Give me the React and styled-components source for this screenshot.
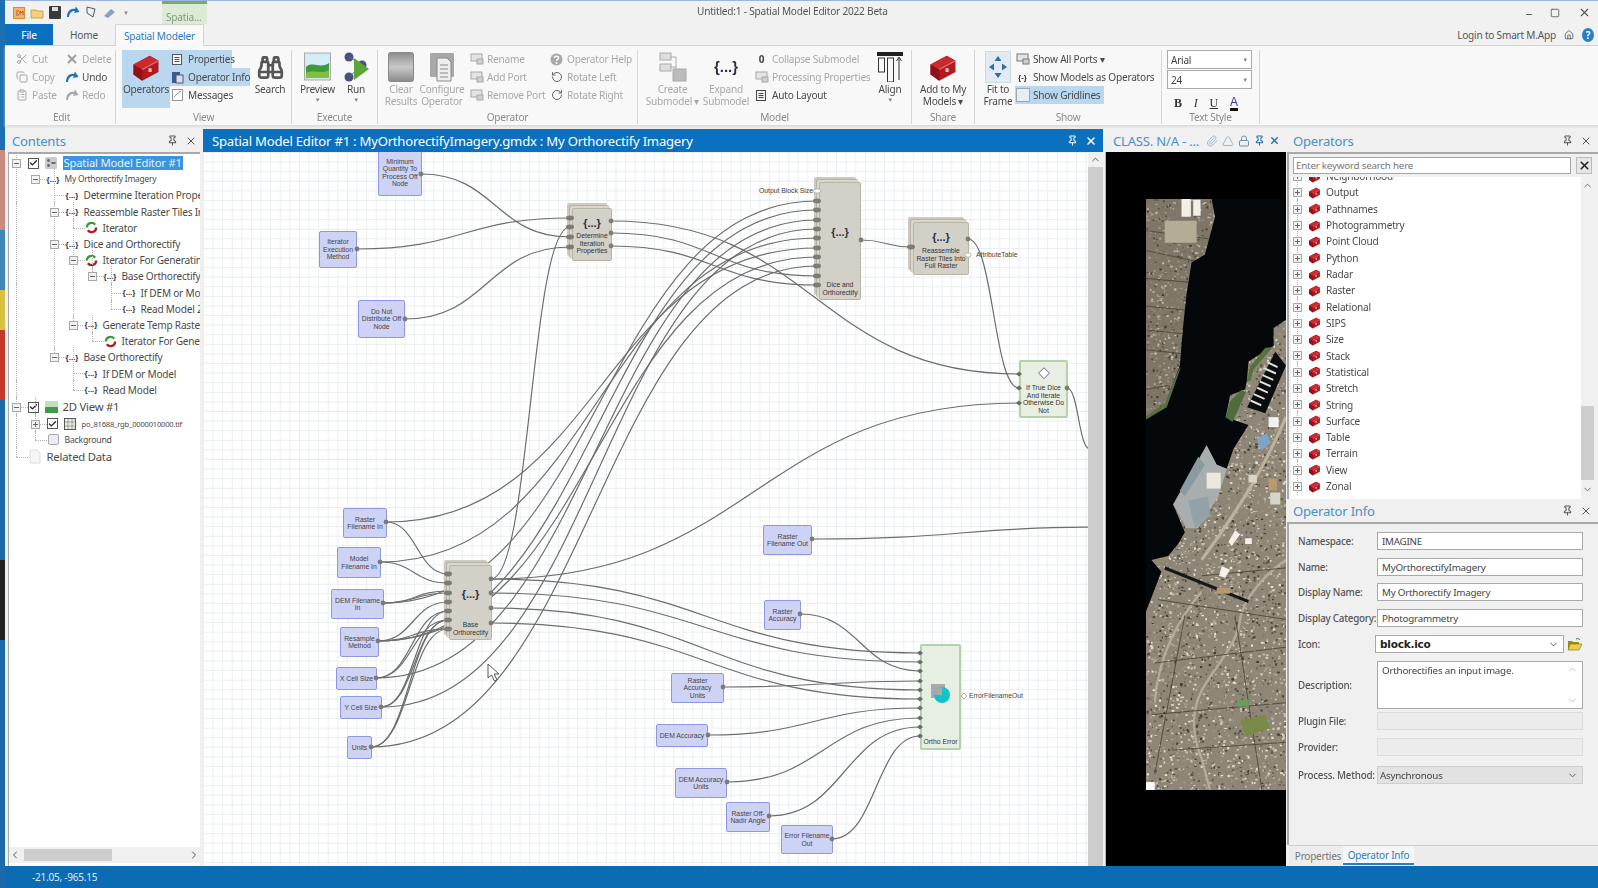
import React from "react";
import styled, { createGlobalStyle } from "styled-components";
import { Scissors, Copy, ClipboardList, X, Binoculars, RotateCcw, RotateCw, Check, ChevronDown, ChevronUp, ChevronLeft, ChevronRight, Pin, Lock, Paperclip, Triangle, Square, Home } from "lucide-react";

const Global = createGlobalStyle`
  html, body { margin: 0; padding: 0; overflow: hidden; background: #f0f0f0; }
  * { box-sizing: border-box; }
`;

const Screen = styled.div`
  width: 1598px;
  height: 888px;
  display: flex;
  overflow: hidden;
  font-family: "Noto Sans", sans-serif;
  letter-spacing: -0.22px;
  color: #444;
  filter: blur(0.35px);
`;
const DesktopStrip = styled.div`
  width: 5px;
  flex: none;
  background: linear-gradient(#1c6fb0 0 150px, #c98a80 150px 230px, #3c86b8 230px 290px, #d8c040 290px 330px, #c23a2a 330px 400px, #1d6aa8 400px 560px, #222 560px 640px, #1b69a8 640px);
`;
const Window = styled.div`
  flex: 1;
  display: flex;
  flex-direction: column;
  border-top: 1px solid #9db4de;
  min-width: 0;
`;
const TitleBar = styled.div`
  height: 23px;
  display: flex;
  align-items: center;
  background: #f1f1f1;
  position: relative;
`;
const QuickIcons = styled.div`
  display: flex;
  align-items: center;
  gap: 5px;
  padding-left: 8px;
  width: 157px;
`;
const ContextTab = styled.div`
  width: 45px;
  height: 23px;
  align-self: flex-start;
  background: #dcebd6;
  border-top: 3px solid #74ab74;
  color: #7f9c80;
  font-size: 10.1px;
  padding: 6px 0 0 4px;
  white-space: nowrap;
`;
const WindowTitle = styled.div`
  position: absolute;
  left: 692px;
  top: 3px;
  font-size: 10.1px;
  color: #555;
  white-space: nowrap;
`;
const WindowButtons = styled.div`
  margin-left: auto;
  display: flex;
  align-items: center;
  gap: 18px;
  padding-right: 7px;
  color: #555;
  font-size: 13px;
`;
const TabRow = styled.div`
  height: 22px;
  display: flex;
  align-items: stretch;
  background: #f1f1f1;
  border-bottom: 1px solid #d0d0d0;
`;
const Tab = styled.div`
  width: ${(p) => p.$w}px;
  display: flex;
  align-items: center;
  justify-content: center;
  font-size: 10.1px;
  color: ${(p) => (p.$file ? "#fff" : p.$active ? "#2a7ec0" : "#555")};
  background: ${(p) => (p.$file ? "#0c6fc0" : p.$active ? "#f9f9f9" : "transparent")};
  border: ${(p) => (p.$active ? "1px solid #d4d4d4" : "none")};
  border-bottom: none;
  ${(p) => p.$active && "height: 23px;"}
`;
const LoginArea = styled.div`
  margin-left: auto;
  display: flex;
  align-items: center;
  gap: 8px;
  padding-right: 4px;
  font-size: 10.1px;
  color: #555;
`;
const HelpDot = styled.span`
  width: 12px;
  height: 14px;
  border-radius: 50%;
  background: #2a7fc4;
  color: #fff;
  font-size: 10px;
  font-weight: 700;
  display: flex;
  align-items: center;
  justify-content: center;
`;
const Ribbon = styled.div`
  height: 80px;
  display: flex;
  padding-left: 3px;
  background: #f8f8f8;
  border-bottom: 1px solid #dcdcdc;
  box-shadow: 0 1px 2px #ddd;
`;
const Group = styled.div`
  width: ${(p) => p.$w}px;
  height: 74px;
  margin-top: 4px;
  display: flex;
  flex-direction: column;
  border-right: 1px solid #d6d6d6;
`;
const GroupBody = styled.div`
  height: 60px;
  display: flex;
  align-items: flex-start;
  padding-left: ${(p) => p.$pl || 0}px;
  gap: ${(p) => p.$gap || 0}px;
`;
const GroupLabel = styled.div`
  text-align: center;
  font-size: 10.1px;
  line-height: 14px;
  color: #8a8a8a;
`;
const Col = styled.div`
  width: ${(p) => p.$w}px;
  flex: none;
  display: flex;
  flex-direction: column;
  margin-left: ${(p) => p.$ml || 0}px;
`;
const SmallBtn = styled.div`
  height: 18px;
  display: flex;
  align-items: center;
  gap: 3px;
  font-size: 10.1px;
  white-space: nowrap;
  width: ${(p) => (p.$fit ? `${p.$fit}px` : "auto")};
  color: ${(p) => (p.$off ? "#a8a8a8" : "#4a4a4a")};
  background: ${(p) => (p.$on ? "#b9d8f0" : "transparent")};
`;
const IconSlot = styled.span`
  width: 15px;
  height: 15px;
  flex: none;
  display: flex;
  align-items: center;
  justify-content: center;
  color: ${(p) => p.$c || "#a8a8a8"};
  font-size: 10px;
  font-weight: 700;
`;
const BigBtn = styled.div`
  width: ${(p) => p.$w}px;
  height: ${(p) => (p.$on ? 58 : 60)}px;
  flex: none;
  display: flex;
  flex-direction: column;
  align-items: center;
  font-size: 10.1px;
  line-height: 11.5px;
  text-align: center;
  white-space: nowrap;
  color: ${(p) => (p.$off ? "#a8a8a8" : "#4a4a4a")};
  background: ${(p) => (p.$on ? "#b9d8f0" : "transparent")};
`;
const BigIcon = styled.div`
  height: 34px;
  flex: none;
  display: flex;
  align-items: center;
  justify-content: center;
`;
const Drop = styled.span`
  font-size: 6px;
  line-height: 8px;
  color: #888;
`;
const Braces = styled.span`
  font-family: "Liberation Sans", sans-serif;
  font-weight: 700;
  letter-spacing: 0;
  font-size: ${(p) => p.$s || 9}px;
  color: ${(p) => p.$c || "#2e2e48"};
  white-space: nowrap;
`;
const ComboSmall = styled.div`
  width: 85px;
  height: 19px;
  background: #fff;
  border: 1px solid #aaa;
  margin: 0 0 1px 5px;
  display: flex;
  align-items: center;
  justify-content: space-between;
  padding: 0 3px;
  font-size: 10px;
  color: #444;
`;
const StyleRow = styled.div`
  display: flex;
  align-items: center;
  gap: 12px;
  padding: 6px 0 0 12px;
  font-family: "Liberation Serif", serif;
  font-size: 12px;
  color: #333;
`;
const ColorA = styled.span`
  border-bottom: 3px solid #111;
  color: #2638a8;
  font-family: "Liberation Sans", sans-serif;
  line-height: 12px;
`;

const Panes = styled.div`
  flex: 1;
  min-height: 0;
  display: flex;
  margin-top: 3px;
  padding-left: 3px;
  background: #f0f0f0;
`;
const Pane = styled.div`
  width: ${(p) => p.$w}px;
  flex: none;
  margin-right: ${(p) => p.$mr || 0}px;
  display: flex;
  flex-direction: column;
  min-height: 0;
  overflow: hidden;
`;
const PaneHeader = styled.div`
  height: 23px;
  flex: none;
  display: flex;
  align-items: center;
  padding: 0 6px 0 ${(p) => p.$pl || 4}px;
  color: ${(p) => (p.$active ? "#fff" : "#4a90c8")};
  background: ${(p) => (p.$active ? "#0b70be" : "#f0f0f0")};
  font-size: 13.1px;
  white-space: nowrap;
`;
const HeaderTools = styled.div`
  margin-left: auto;
  display: flex;
  align-items: center;
  gap: ${(p) => p.$gap || 7}px;
  color: ${(p) => p.$c || "#555"};
`;
const TreeBox = styled.div`
  flex: 1;
  min-height: 0;
  background: #fff;
  border-top: 2px solid #a9a9a9;
  border-left: 1px solid #a9a9a9;
  margin-right: 3px;
  display: flex;
  flex-direction: column;
`;
const TreeList = styled.div`
  flex: 1;
  padding-top: 1px;
  overflow: hidden;
`;
const TreeRow = styled.div`
  position: relative;
  height: 16.2px;
  margin-top: ${(p) => p.$mt || 0}px;
  padding-left: ${(p) => p.$pad}px;
  display: flex;
  align-items: center;
  gap: 5px;
  white-space: nowrap;
  font-size: ${(p) => p.$fs || 10.1}px;
  color: #4a4a4a;
`;
const RowGuide = styled.span`
  position: absolute;
  left: ${(p) => p.$x}px;
  top: -2px;
  height: ${(p) => (p.$half ? "10px" : "19px")};
  border-left: 1px dotted #b5b5b5;
`;
const RowStub = styled.span`
  position: absolute;
  left: ${(p) => p.$x}px;
  top: 8px;
  width: ${(p) => p.$w}px;
  border-top: 1px dotted #b5b5b5;
`;
const Expander = styled.span`
  position: absolute;
  left: ${(p) => p.$x}px;
  top: 4px;
  width: 9px;
  height: 9px;
  background: #f2f2f2;
  border: 1px solid #a8a8a8;
  &::before {
    content: "";
    position: absolute;
    left: 1px;
    right: 1px;
    top: 3px;
    height: 1px;
    background: #666;
  }
  &::after {
    content: "";
    display: ${(p) => (p.$plus ? "block" : "none")};
    position: absolute;
    top: 1px;
    bottom: 1px;
    left: 3px;
    width: 1px;
    background: #666;
  }
`;
const CheckBox = styled.span`
  width: 11px;
  height: 11px;
  flex: none;
  border: 1px solid #555;
  background: #fff;
  display: flex;
  align-items: center;
  justify-content: center;
  margin-right: 1px;
`;
const TreeIconSlot = styled.span`
  width: 13px;
  height: 12px;
  flex: none;
  display: flex;
  align-items: center;
  justify-content: center;
`;
const TreeLabel = styled.span`
  background: ${(p) => (p.$sel ? "#3b94e0" : "transparent")};
  color: ${(p) => (p.$sel ? "#e6f2fb" : "inherit")};
  padding: 0 ${(p) => (p.$sel ? 1 : 0)}px;
  line-height: 14px;
`;
const HScroll = styled.div`
  height: 16px;
  flex: none;
  display: flex;
  align-items: center;
  background: #f0f0f0;
  margin-bottom: 3px;
  color: #555;
`;
const HThumb = styled.div`
  width: 88px;
  height: 12px;
  margin-left: 3px;
  margin-right: auto;
  background: #cdcdcd;
`;

const EditorBody = styled.div`
  flex: 1;
  min-height: 0;
  display: flex;
`;
const Canvas = styled.div`
  position: relative;
  flex: 1;
  overflow: hidden;
  background-color: #fff;
  background-image:
    linear-gradient(#e9eef0 1px, transparent 1px),
    linear-gradient(90deg, #e9eef0 1px, transparent 1px);
  background-size: 9.6px 9.6px;
`;
const Layer = styled.svg`
  position: absolute;
  left: 0;
  top: 0;
  width: 885px;
  height: 713px;
`;
const VScroll = styled.div`
  width: 15px;
  flex: none;
  display: flex;
  flex-direction: column;
  align-items: center;
  background: #f0f0f0;
  color: #555;
`;
const VThumb = styled.div`
  flex: 1;
  align-self: stretch;
  margin-top: 2px;
  background: #cdcdcd;
`;
const Node = styled.div`
  position: absolute;
  left: ${(p) => p.$x - 203}px;
  top: ${(p) => p.$y - 153}px;
  width: ${(p) => p.$w}px;
  height: ${(p) => p.$h}px;
  display: flex;
  align-items: center;
  justify-content: center;
  text-align: center;
  padding: 0 ${(p) => p.$px || 0}px;
  font-family: "Liberation Sans", sans-serif;
  letter-spacing: 0;
  font-size: 6.8px;
  line-height: 7.4px;
  color: #444;
  background: #ced2f4;
  border: 1px solid #8f98de;
  border-radius: 2px;
`;
const Block = styled.div`
  position: absolute;
  left: ${(p) => p.$x - 203}px;
  top: ${(p) => p.$y - 153}px;
  width: ${(p) => p.$w}px;
  height: ${(p) => p.$h}px;
  display: flex;
  flex-direction: column;
  align-items: center;
  justify-content: ${(p) => (p.$spread ? "space-between" : "flex-start")};
  padding: ${(p) => p.$top || 0}px 0 ${(p) => p.$bottom || 2}px;
  text-align: center;
  font-family: "Liberation Sans", sans-serif;
  letter-spacing: 0;
  font-size: 6.8px;
  line-height: 7.4px;
  color: #333;
  background: #d3d0c8;
  border: 1px solid #b8b5a6;
  border-radius: 2px;
  box-shadow: -2px -2px 0 #d9d6cc, -3px -3px 0 #b8b5a6, -5px -5px 0 #cdcabd;
`;
const GreenBlock = styled(Block)`
  background: #e6efe2;
  border: 2px solid #b4d2a8;
  box-shadow: none;
`;
const BlockGap = styled.div`
  height: ${(p) => p.$h}px;
  flex: none;
`;
const PortLabel = styled.span`
  position: absolute;
  left: ${(p) => p.$x - 203}px;
  top: ${(p) => p.$y - 153}px;
  font-family: "Liberation Sans", sans-serif;
  letter-spacing: 0;
  font-size: 6.8px;
  line-height: 8px;
  color: #444;
  white-space: nowrap;
`;
const Pointer = styled.svg`
  position: absolute;
  left: 284px;
  top: 511px;
`;

const MapPane = styled.div`
  flex: 1;
  min-height: 0;
  background: #000;
  padding: 47px 0 76px 40px;
  border-left: 1px solid #bbb;
`;
const MapSvg = styled.svg`
  display: block;
  width: 100%;
  height: 100%;
`;

const OpPanel = styled.div`
  height: ${(p) => p.$h}px;
  flex: none;
  border-top: 2px solid #a9a9a9;
  border-left: 2px solid #a9a9a9;
  display: flex;
  flex-direction: column;
  background: #f0f0f0;
`;
const SearchRow = styled.div`
  height: 23px;
  flex: none;
  display: flex;
  align-items: flex-start;
  padding: 3px 0 0 4px;
`;
const SearchInput = styled.div`
  width: 278px;
  height: 17px;
  background: #fff;
  border: 1px solid #a5a5a5;
  padding-left: 2px;
  font-size: 9.8px;
  line-height: 15px;
  color: #777;
`;
const ClearBtn = styled.div`
  width: 16px;
  height: 17px;
  margin-left: 5px;
  background: #e6e6e6;
  border: 1px solid #bbb;
  display: flex;
  align-items: center;
  justify-content: center;
  color: #222;
`;
const OpBody = styled.div`
  flex: 1;
  min-height: 0;
  display: flex;
  padding-left: 2px;
`;
const OpList = styled.div`
  width: 290px;
  overflow: hidden;
  background: #fff;
`;
const OpRows = styled.div`
  margin-top: -9px;
`;
const OpRow = styled.div`
  position: relative;
  height: 16.32px;
  padding-left: 17px;
  display: flex;
  align-items: center;
  gap: 5px;
  font-size: 10.1px;
  color: #4a4a4a;
  white-space: nowrap;
`;
const OpScroll = styled.div`
  width: 13px;
  display: flex;
  flex-direction: column;
  align-items: center;
  color: #666;
  background: #f0f0f0;
`;
const OpThumb = styled.div`
  height: 74px;
  align-self: stretch;
  margin-top: 215px;
  margin-bottom: 4px;
  background: #cdcdcd;
`;
const Form = styled.div`
  flex: 1;
  padding: 8px 15px 0 9px;
  display: flex;
  flex-direction: column;
`;
const Field = styled.div`
  display: flex;
  align-items: center;
  height: ${(p) => p.$h || 18}px;
  margin-top: ${(p) => p.$mt || 0}px;
  font-size: 9.8px;
  color: #555;
`;
const FieldLabel = styled.div`
  width: 79px;
  flex: none;
  font-weight: 500;
  white-space: nowrap;
`;
const Input = styled.div`
  flex: 1;
  height: 100%;
  display: flex;
  align-items: center;
  padding-left: 4px;
  background: ${(p) => (p.$off ? "#ececec" : "#fff")};
  border: 1px solid ${(p) => (p.$off ? "#dcdcdc" : "#a9a9a9")};
  color: #444;
  font-size: 9.8px;
`;
const IconCombo = styled.div`
  width: 189px;
  height: 100%;
  margin-left: -2px;
  background: #fff;
  border: 1px solid #a9a9a9;
  display: flex;
  align-items: center;
  justify-content: space-between;
  padding: 0 4px;
  font-family: "DejaVu Sans", sans-serif;
  font-size: 10.5px;
  font-weight: 700;
  color: #222;
`;
const FolderSlot = styled.span`
  margin-left: 3px;
  display: flex;
`;
const DescBox = styled.div`
  flex: 1;
  height: 100%;
  background: #fff;
  border: 1px solid #a9a9a9;
  padding: 2px 4px;
  display: flex;
  justify-content: space-between;
  color: #444;
`;
const DescScroll = styled.div`
  display: flex;
  flex-direction: column;
  justify-content: space-between;
  color: #bbb;
`;
const SelectBox = styled(Input)`
  background: #e2e2e2;
  justify-content: space-between;
  padding: 0 4px 0 2px;
  border: 1px solid #cfcfcf;
`;
const BottomTabs = styled.div`
  height: 20px;
  flex: none;
  display: flex;
  border-top: 1px solid #cfcfcf;
  background: #ececec;
  padding-left: 4px;
  margin-left: 2px;
  font-size: 10px;
`;
const BottomTab = styled.div`
  width: ${(p) => p.$w}px;
  display: flex;
  align-items: center;
  justify-content: center;
  color: ${(p) => (p.$on ? "#2a7ec0" : "#777")};
  background: ${(p) => (p.$on ? "#f6f6f6" : "transparent")};
  border-bottom: ${(p) => (p.$on ? "2px solid #2a7ec0" : "none")};
`;
const StatusBar = styled.div`
  height: 22px;
  flex: none;
  display: flex;
  align-items: center;
  padding-left: 27px;
  background: #0b6cb4;
  color: #dfeaf5;
  font-size: 10px;
`;

// little drawings

const Toolbox = ({ s = 13 }) => (
  <svg width={s} height={s} viewBox="0 0 24 24">
    <path d="M2 10 L15 3 L22 7 L22 16 L9 23 L2 18 Z" fill="#b3191f" />
    <path d="M2 10 L9 14 L9 23 L2 18 Z" fill="#8f1217" />
    <path d="M2 10 L15 3 L22 7 L9 14 Z" fill="#c92a2e" />
    <path d="M9 14 L22 7" stroke="#e37070" strokeWidth="1" />
    <rect x="14" y="13" width="2.5" height="3" fill="#f0c0c0" />
  </svg>
);
const IteratorIcon = () => (
  <svg width="13" height="13" viewBox="0 0 14 14" fill="none">
    <path d="M2 7 A5 5 0 0 1 11 4" stroke="#3f9a3f" strokeWidth="2.4" />
    <path d="M12 7 A5 5 0 0 1 3 10" stroke="#b3191f" strokeWidth="2.4" />
  </svg>
);
const ModelIcon = () => (
  <svg width="12" height="12" viewBox="0 0 12 12">
    <rect width="12" height="12" rx="1" fill="#ccc" />
    <circle cx="3.5" cy="3.5" r="1.4" fill="#667" />
    <circle cx="3.5" cy="8.5" r="1.4" fill="#667" />
    <rect x="6.5" y="5" width="4" height="2" fill="#667" />
  </svg>
);
const ViewIcon = () => (
  <svg width="13" height="12" viewBox="0 0 13 12">
    <rect width="13" height="12" fill="#bfe0b8" />
    <rect y="6" width="13" height="6" fill="#3f9a4a" />
  </svg>
);
const RasterIcon = () => (
  <svg width="12" height="12" viewBox="0 0 12 12">
    <rect x=".5" y=".5" width="11" height="11" fill="#e8ece4" stroke="#556" />
    <path d="M4 1v10M8 1v10M1 4h10M1 8h10" stroke="#8a9a80" strokeWidth=".8" />
  </svg>
);
const SwatchIcon = () => (
  <svg width="11" height="11" viewBox="0 0 11 11">
    <rect x=".5" y=".5" width="10" height="10" rx="1.5" fill="#eceaf5" stroke="#aaa" />
  </svg>
);
const DocIcon = () => (
  <svg width="12" height="15" viewBox="0 0 12 15">
    <path d="M1 1h7l3 3v10H1z" fill="#f6f6f6" stroke="#ddd" />
  </svg>
);
const MiniDoc = ({ c = "#a8a8a8" }) => (
  <svg width="13" height="13" viewBox="0 0 13 13" fill="none" stroke={c}>
    <rect x="1.5" y="1.5" width="9" height="10" fill="#f4f4f4" />
    <path d="M3.5 4.5h5M3.5 6.5h5M3.5 8.5h5" />
  </svg>
);
const InfoDoc = () => (
  <svg width="13" height="13" viewBox="0 0 13 13">
    <rect x="1" y="1" width="8" height="11" fill="#3c5a96" />
    <rect x="5" y="4" width="7" height="8" fill="#d8deee" stroke="#556" />
  </svg>
);
const CheckDoc = () => (
  <svg width="13" height="14" viewBox="0 0 13 14" fill="none">
    <rect x="1.5" y="1.5" width="10" height="11" fill="#fff" stroke="#999" />
    <path d="M3 9 L6 6 L10 3" stroke="#7a9ac0" />
  </svg>
);
const DeleteX = () => <X size={14} strokeWidth={3.5} color="#a0a0a0" />;
const UndoArrow = ({ c = "#1f72b8" }) => (
  <svg width="14" height="13" viewBox="0 0 14 13">
    <path d="M1 11 C1 5 5 2 9 3 L10 0.5 L13.5 6 L8 7 L8.8 5.2 C6 4.6 3.5 7 3 11 Z" fill={c} />
  </svg>
);
const Mini = ({ c = "#a8a8a8" }) => (
  <svg width="14" height="12" viewBox="0 0 14 12">
    <rect x="1" y="1" width="11" height="7" fill="#e4e4e4" stroke={c} />
    <rect x="7" y="6" width="6" height="5" fill="#cfcfcf" stroke={c} />
  </svg>
);
const HelpIcon = () => (
  <svg width="13" height="13" viewBox="0 0 13 13">
    <circle cx="6.5" cy="6.5" r="6" fill="#a8a8a8" />
    <path d="M4.4 5 C4.4 2.6 8.6 2.6 8.6 5 C8.6 6.4 6.5 6.4 6.5 8" stroke="#fff" strokeWidth="1.4" fill="none" />
    <circle cx="6.5" cy="10" r=".9" fill="#fff" />
  </svg>
);
const PreviewIcon = () => (
  <svg width="27" height="31" viewBox="0 0 27 31">
    <rect x=".5" y="1" width="26" height="27" fill="#cfe8f4" stroke="#aaa" />
    <rect x="2" y="3" width="23" height="10" fill="#d4edf7" />
    <path d="M2 15 C8 9 16 17 25 11 V26 H2 Z" fill="#3d9a3d" />
    <path d="M2 21 C9 17 17 23 25 18 V26 H2 Z" fill="#7fbe3f" />
  </svg>
);
const RunIcon = () => (
  <svg width="28" height="32" viewBox="0 0 28 32">
    <circle cx="7" cy="6" r="4.5" fill="#4a4f80" />
    <circle cx="20" cy="14" r="4.5" fill="#4a4f80" />
    <circle cx="7" cy="26" r="4.5" fill="#4a4f80" />
    <path d="M7 6 L20 14 L7 26" stroke="#666" fill="none" />
    <path d="M12 7 L27 18 L12 29 Z" fill="#5aa638" />
  </svg>
);
const ClearIcon = () => (
  <svg width="26" height="30" viewBox="0 0 26 30">
    <defs>
      <linearGradient id="clr" x1="0" y1="0" x2="0" y2="1">
        <stop offset="0" stopColor="#8c8c8c" />
        <stop offset=".5" stopColor="#c8c8c8" />
        <stop offset="1" stopColor="#8a8a8a" />
      </linearGradient>
    </defs>
    <rect x=".5" y=".5" width="25" height="29" rx="2" fill="url(#clr)" stroke="#888" />
  </svg>
);
const ConfigureIcon = () => (
  <svg width="26" height="30" viewBox="0 0 26 30">
    <rect x="1" y="1" width="24" height="24" rx="1" fill="#a8a8a8" />
    <path d="M8 6h10l4 4v19H8z" fill="#eee" stroke="#888" />
    <path d="M11 13h8M11 17h8M11 21h8M11 25h8" stroke="#888" />
  </svg>
);
const CreateIcon = () => (
  <svg width="28" height="30" viewBox="0 0 28 30" fill="#ddd" stroke="#aaa">
    <rect x="1" y="1" width="11" height="7" />
    <rect x="1" y="12" width="11" height="7" />
    <rect x="14" y="17" width="13" height="12" fill="#bbb" />
    <path d="M12 5h5v12M12 15h5" fill="none" />
  </svg>
);
const AlignIcon = () => (
  <svg width="26" height="30" viewBox="0 0 26 30" fill="none" stroke="#333">
    <rect x="0" y="0" width="26" height="4" fill="#222" stroke="none" />
    <rect x="1.5" y="6" width="6" height="14" />
    <rect x="10.5" y="6" width="6" height="24" />
    <path d="M22 28V6M19.5 9 22 5l2.5 4" />
  </svg>
);
const FitIcon = () => (
  <svg width="26" height="32" viewBox="0 0 26 32">
    <rect x=".5" y=".5" width="25" height="31" fill="#e4eaf2" stroke="#cdd" />
    <path d="M13 5l3.5 5h-7zM13 27l3.5-5h-7zM4 16l5-3.5v7zM22 16l-5-3.5v7z" fill="#2a6fb0" />
  </svg>
);
const GridBox = () => (
  <svg width="14" height="14" viewBox="0 0 14 14">
    <rect x=".5" y=".5" width="13" height="13" fill="#e6eef4" stroke="#9aa" />
  </svg>
);
const FolderIcon = () => (
  <svg width="15" height="13" viewBox="0 0 15 13">
    <path d="M1 3h4l1 1h6v8H1z" fill="#9a8a10" />
    <path d="M3 6h12l-3 6H1z" fill="#e8d04a" stroke="#7a6c10" strokeWidth=".6" />
    <path d="M9 1c2-1 3 0 4 1" stroke="#2a7a3a" fill="none" />
  </svg>
);

const Small = ({ icon, c, label, off, on, fit }) => (
  <SmallBtn $off={off} $on={on} $fit={fit}>
    <IconSlot $c={c}>{icon}</IconSlot>
    {label}
  </SmallBtn>
);
const Big = ({ icon, w, lines, off, on, drop }) => (
  <BigBtn $w={w} $off={off} $on={on}>
    <BigIcon>{icon}</BigIcon>
    {lines.map((t) => (
      <span key={t}>{t}</span>
    ))}
    {drop && <Drop>▼</Drop>}
  </BigBtn>
);

const RibbonBar = () => (
  <Ribbon>
    <Group $w={108}>
      <GroupBody $pl={6}>
        <Col $w={50}>
          <Small off icon={<Scissors size={12} />} label="Cut" />
          <Small off icon={<Copy size={12} />} label="Copy" />
          <Small off icon={<ClipboardList size={12} />} label="Paste" />
        </Col>
        <Col $w={50}>
          <Small off icon={<DeleteX />} label="Delete" />
          <Small icon={<UndoArrow />} label="Undo" />
          <Small off icon={<UndoArrow c="#a8a8a8" />} label="Redo" />
        </Col>
      </GroupBody>
      <GroupLabel>Edit</GroupLabel>
    </Group>
    <Group $w={176}>
      <GroupBody $pl={6}>
        <BigBtn $w={48} $on>
          <BigIcon>
            <Toolbox s={30} />
          </BigIcon>
          <span>Operators</span>
        </BigBtn>
        <Col $w={85}>
          <Small on fit={62} c="#555" icon={<MiniDoc c="#556" />} label="Properties" />
          <Small on fit={80} icon={<InfoDoc />} label="Operator Info" />
          <Small icon={<CheckDoc />} label="Messages" />
        </Col>
        <Big w={30} icon={<Binoculars size={27} color="#555" strokeWidth={2.4} />} lines={["Search"]} />
      </GroupBody>
      <GroupLabel>View</GroupLabel>
    </Group>
    <Group $w={86}>
      <GroupBody $pl={8} $gap={5}>
        <Big w={35} icon={<PreviewIcon />} lines={["Preview"]} drop />
        <Big w={32} icon={<RunIcon />} lines={["Run"]} drop />
      </GroupBody>
      <GroupLabel>Execute</GroupLabel>
    </Group>
    <Group $w={260}>
      <GroupBody $pl={7}>
        <Big off w={32} icon={<ClearIcon />} lines={["Clear", "Results"]} />
        <Big off w={50} icon={<ConfigureIcon />} lines={["Configure", "Operator"]} />
        <Col $w={80} $ml={2}>
          <Small off icon={<Mini />} label="Rename" />
          <Small off icon={<Mini />} label="Add Port" />
          <Small off icon={<Mini />} label="Remove Port" />
        </Col>
        <Col $w={85}>
          <Small off icon={<HelpIcon />} label="Operator Help" />
          <Small c="#666" off icon={<RotateCcw size={12} />} label="Rotate Left" />
          <Small c="#666" off icon={<RotateCw size={12} />} label="Rotate Right" />
        </Col>
      </GroupBody>
      <GroupLabel>Operator</GroupLabel>
    </Group>
    <Group $w={274}>
      <GroupBody $pl={7}>
        <Big off w={55} icon={<CreateIcon />} lines={["Create", "Submodel ▾"]} />
        <Big off w={52} icon={<Braces $s={15}>{"{...}"}</Braces>} lines={["Expand", "Submodel"]} />
        <Col $w={119} $ml={2}>
          <Small c="#444" off icon="0" label="Collapse Submodel" />
          <Small off icon={<Mini />} label="Processing Properties" />
          <Small icon={<MiniDoc c="#445" />} label="Auto Layout" />
        </Col>
        <Big w={34} icon={<AlignIcon />} lines={["Align"]} drop />
      </GroupBody>
      <GroupLabel>Model</GroupLabel>
    </Group>
    <Group $w={63}>
      <GroupBody>
        <Big w={62} icon={<Toolbox s={30} />} lines={["Add to My", "Models ▾"]} />
      </GroupBody>
      <GroupLabel>Share</GroupLabel>
    </Group>
    <Group $w={187}>
      <GroupBody $pl={8}>
        <Big w={30} icon={<FitIcon />} lines={["Fit to", "Frame"]} />
        <Col $w={146} $ml={2}>
          <Small c="#777" icon={<Mini c="#777" />} label="Show All Ports   ▾" />
          <Small c="#445" icon={<Braces $s={8}>{"{-}"}</Braces>} label="Show Models as Operators" />
          <Small on fit={89} icon={<GridBox />} label="Show Gridlines" />
        </Col>
      </GroupBody>
      <GroupLabel>Show</GroupLabel>
    </Group>
    <Group $w={98}>
      <GroupBody>
        <Col $w={98}>
          <ComboSmall>
            Arial
            <Drop>▼</Drop>
          </ComboSmall>
          <ComboSmall>
            24
            <Drop>▼</Drop>
          </ComboSmall>
          <StyleRow>
            <b>B</b>
            <i>I</i>
            <u>U</u>
            <ColorA>A</ColorA>
          </StyleRow>
        </Col>
      </GroupBody>
      <GroupLabel>Text Style</GroupLabel>
    </Group>
  </Ribbon>
);

// contents tree
const L = (n) => 16 + 19 * n;
const treeRows = [
  { label: "Spatial Model Editor #1", x: 0, exp: "-", check: 1, icon: <ModelIcon />, pad: 18.5, sel: 1, fs: 11.3 },
  { label: "My Orthorectify Imagery", x: 1, exp: "-", icon: "b", pad: 37.5, fs: 8.4 },
  { label: "Determine Iteration Properties", x: 2, icon: "b", pad: 56.5 },
  { label: "Reassemble Raster Tiles Into", x: 2, exp: "-", icon: "b", pad: 56.5 },
  { label: "Iterator", x: 3, icon: <IteratorIcon />, pad: 75.5 },
  { label: "Dice and Orthorectify", x: 2, exp: "-", icon: "b", pad: 56.5 },
  { label: "Iterator For Generating", x: 3, exp: "-", icon: <IteratorIcon />, pad: 75.5 },
  { label: "Base Orthorectify", x: 4, exp: "-", icon: "b", pad: 94.5 },
  { label: "If DEM or Model", x: 5, icon: "b", pad: 113.5 },
  { label: "Read Model 2", x: 5, icon: "b", pad: 113.5 },
  { label: "Generate Temp Raster", x: 3, exp: "-", icon: "b", pad: 75.5 },
  { label: "Iterator For Generating", x: 4, icon: <IteratorIcon />, pad: 94.5 },
  { label: "Base Orthorectify", x: 2, exp: "-", icon: "b", pad: 56.5 },
  { label: "If DEM or Model", x: 3, icon: "b", pad: 75.5 },
  { label: "Read Model", x: 3, icon: "b", pad: 75.5 },
  { label: "2D View #1", x: 0, exp: "-", check: 1, icon: <ViewIcon />, pad: 18.5, mt: 1.5, fs: 11.3 },
  { label: "po_81688_rgb_0000010000.tif", x: 1, exp: "+", check: 1, icon: <RasterIcon />, pad: 37.5, fs: 7.6 },
  { label: "Background", x: 1, icon: <SwatchIcon />, pad: 37.5, fs: 8.7 },
  { label: "Related Data", x: 0, icon: <DocIcon />, pad: 19.5, mt: 1, fs: 11.3 },
];
const guideSpans = [
  { level: 0, from: 0, to: 18 },
  { level: 2, from: 1, to: 12 },
  { level: 3, from: 3, to: 4 },
  { level: 3, from: 5, to: 10 },
  { level: 3, from: 12, to: 14 },
  { level: 4, from: 6, to: 7 },
  { level: 4, from: 10, to: 11 },
  { level: 5, from: 7, to: 9 },
  { level: 1, from: 15, to: 17 },
];

const ContentsTree = () => (
  <TreeList>
    {treeRows.map((r, i) => (
      <TreeRow key={i} $pad={r.pad} $mt={r.mt} $fs={r.fs}>
        {guideSpans
          .filter((g) => i >= g.from && i <= g.to)
          .map((g) => (
            <RowGuide key={g.level + "-" + g.from} $x={L(g.level) - 9} $half={i === g.to} />
          ))}
        {i > 0 && <RowStub $x={L(r.x) - 9} $w={12} />}
        {r.exp && <Expander $x={L(r.x) - 13} $plus={r.exp === "+"} />}
        {r.check && (
          <CheckBox>
            <Check size={10} strokeWidth={3.5} color="#222" />
          </CheckBox>
        )}
        <TreeIconSlot>{r.icon === "b" ? <Braces $s={8}>{"{...}"}</Braces> : r.icon}</TreeIconSlot>
        <TreeLabel $sel={r.sel}>{r.label}</TreeLabel>
      </TreeRow>
    ))}
  </TreeList>
);

// model canvas, all in screen coords (viewBox starts at 203,153)
const wire = ([x1, y1], [x2, y2]) => {
  const mx = (x1 + x2) / 2;
  return `M${x1} ${y1} C${mx} ${y1} ${mx} ${y2} ${x2} ${y2}`;
};
const P = {
  min: [421, 175],
  iter: [357, 250],
  dist: [405, 320],
  rasIn: [386, 523],
  modIn: [380, 563],
  demIn: [383, 604],
  res: [378, 642],
  xc: [376, 679],
  yc: [381, 708],
  units: [371, 748],
  rasOut: [812, 540],
  rasAcc: [800, 615],
  rasAccU: [723, 688],
  demAcc: [708, 736],
  demAccU: [727, 783],
  nadir: [769, 817],
  errOut: [832, 840],
};
const detIn = [219, 228, 238, 248].map((y) => [570, y]);
const detOut = [222, 234, 247].map((y) => [611, y]);
const diceIn = [202, 211, 221, 230, 239, 249, 258, 267, 277, 286].map((y) => [817, y]);
const baseIn = [575, 584, 594, 603, 612, 621, 630].map((y) => [448, y]);
const baseOut = [580, 594, 609, 624].map((y) => [491, y]);
const errIn = [654, 663, 672, 682, 691, 700, 709, 719, 728, 737].map((y) => [920, y]);
const ifIn = [375, 389, 404].map((y) => [1019, y]);

const wires = [
  [P.min, detIn[2]],
  [P.iter, detIn[0]],
  [P.dist, detIn[3]],
  [baseOut[0], detIn[1]],
  [detOut[0], ifIn[0]],
  [detOut[1], diceIn[8]],
  [detOut[2], diceIn[9]],
  [P.demIn, diceIn[0]],
  [P.res, diceIn[1]],
  [P.xc, diceIn[2]],
  [P.yc, diceIn[3]],
  [P.modIn, diceIn[4]],
  [P.rasIn, diceIn[5]],
  [P.res, diceIn[6]],
  [P.units, diceIn[7]],
  [P.rasIn, baseIn[0]],
  [P.modIn, baseIn[1]],
  [P.demIn, baseIn[2]],
  [P.demIn, [448, 592]],
  [P.res, baseIn[3]],
  [P.xc, baseIn[4]],
  [P.yc, baseIn[5]],
  [P.units, baseIn[6]],
  [P.res, baseIn[6]],
  [P.xc, baseIn[5]],
  [P.yc, baseIn[4]],
  [P.units, baseIn[5]],
  [baseOut[0], ifIn[2]],
  [baseOut[0], errIn[0]],
  [baseOut[1], errIn[1]],
  [baseOut[2], errIn[4]],
  [baseOut[3], errIn[5]],
  [P.rasAcc, errIn[2]],
  [P.rasAccU, errIn[3]],
  [P.demAcc, errIn[6]],
  [P.demAccU, errIn[7]],
  [P.nadir, errIn[8]],
  [P.errOut, errIn[9]],
  [P.rasOut, [1110, 528]],
  [[861, 241], [911, 248]],
  [[968, 240], ifIn[1]],
  [[1067, 389], [1090, 450]],
];
const ports = [
  ...Object.values(P),
  [861, 241],
  [968, 240],
  [1067, 389],
  ...detOut,
  ...baseOut,
];
const ovalPorts = [...detIn, ...diceIn, ...baseIn, [911, 248]];
const dotPorts = [...errIn, ...ifIn];

const inputNodes = [
  { x: 378, y: 150, w: 44, h: 47, t: "Minimum Quantity To Process Off Node" },
  { x: 319, y: 232, w: 38, h: 37, t: "Iterator Execution Method" },
  { x: 358, y: 301, w: 47, h: 38, t: "Do Not Distribute Off Node" },
  { x: 343, y: 509, w: 44, h: 30, t: "Raster Filename In" },
  { x: 337, y: 548, w: 44, h: 31, t: "Model Filename In" },
  { x: 331, y: 590, w: 53, h: 30, t: "DEM Filename In" },
  { x: 340, y: 628, w: 39, h: 30, t: "Resample Method" },
  { x: 336, y: 668, w: 41, h: 23, t: "X Cell Size" },
  { x: 340, y: 697, w: 42, h: 23, t: "Y Cell Size" },
  { x: 347, y: 737, w: 25, h: 23, t: "Units" },
  { x: 763, y: 526, w: 49, h: 30, t: "Raster Filename Out" },
  { x: 764, y: 601, w: 37, h: 30, t: "Raster Accuracy" },
  { x: 671, y: 674, w: 53, h: 30, t: "Raster Accuracy Units", px: 5 },
  { x: 656, y: 725, w: 52, h: 23, t: "DEM Accuracy" },
  { x: 675, y: 769, w: 52, h: 30, t: "DEM Accuracy Units" },
  { x: 726, y: 803, w: 44, h: 30, t: "Raster Off-Nadir Angle" },
  { x: 781, y: 826, w: 52, h: 29, t: "Error Filename Out" },
];

const ModelCanvas = () => (
  <Canvas>
    <Layer viewBox="203 153 885 713" fill="none">
      {wires.map(([a, b], i) => (
        <path key={i} d={wire(a, b)} stroke="#6d6d6d" strokeWidth="1.2" />
      ))}
    </Layer>
    {inputNodes.map((n) => (
      <Node key={n.t} $x={n.x} $y={n.y} $w={n.w} $h={n.h} $px={n.px}>
        {n.t}
      </Node>
    ))}
    <Block $x={572} $y={209} $w={40} $h={53} $top={11}>
      <Braces $s={11}>{"{...}"}</Braces>
      <BlockGap $h={5} />
      Determine Iteration Properties
    </Block>
    <Block $x={819} $y={183} $w={42} $h={118} $spread $top={46} $bottom={3}>
      <Braces $s={11}>{"{...}"}</Braces>
      <span>Dice and Orthorectify</span>
    </Block>
    <Block $x={913} $y={223} $w={56} $h={53} $top={11}>
      <Braces $s={11}>{"{...}"}</Braces>
      <BlockGap $h={6} />
      Reassemble Raster Tiles Into Full Raster
    </Block>
    <Block $x={449} $y={566} $w={43} $h={75} $spread $top={25} $bottom={3}>
      <Braces $s={11}>{"{...}"}</Braces>
      <span>Base Orthorectify</span>
    </Block>
    <GreenBlock $x={1019} $y={361} $w={49} $h={58} $top={5}>
      <svg width="16" height="16" viewBox="0 0 16 16">
        <path d="M8 1 L15 8 L8 15 L1 8 Z" fill="#fff" stroke="#5a5f78" strokeWidth="1.2" />
      </svg>
      <BlockGap $h={5} />
      If True Dice And Iterate Otherwise Do Not
    </GreenBlock>
    <GreenBlock $x={920} $y={645} $w={41} $h={106} $spread $top={38} $bottom={3}>
      <svg width="20" height="20" viewBox="0 0 20 20">
        <rect x="0" y="0" width="14" height="14" fill="#a9a9a9" />
        <circle cx="11" cy="11" r="8" fill="#10c4cc" />
        <path d="M11 11V3A8 8 0 0 0 3 11Z" fill="#a9a9a9" />
      </svg>
      <span>Ortho Error</span>
    </GreenBlock>
    <PortLabel $x={759} $y={188}>Output Block Size</PortLabel>
    <PortLabel $x={976} $y={252}>AttributeTable</PortLabel>
    <PortLabel $x={969} $y={693}>ErrorFilenameOut</PortLabel>
    <Layer viewBox="203 153 885 713">
      {ports.map(([x, y], i) => (
        <circle key={i} cx={x} cy={y} r="2.4" fill="#7c7c74" />
      ))}
      {ovalPorts.map(([x, y], i) => (
        <ellipse key={i} cx={x} cy={y} rx="4" ry="2.4" fill="#7c7c74" />
      ))}
      {dotPorts.map(([x, y], i) => (
        <path key={i} d={`M${x - 3} ${y}L${x} ${y - 2.5}L${x + 3} ${y}L${x} ${y + 2.5}Z`} fill="#6a6a6a" />
      ))}
      <ellipse cx="817" cy="192" rx="4" ry="2.2" fill="#fff" stroke="#999" strokeWidth=".7" />
      <ellipse cx="968" cy="256" rx="3" ry="2.2" fill="#fff" stroke="#999" strokeWidth=".7" />
      <path d="M958 697l3-3 3 3-3 3z" fill="#fff" stroke="#888" strokeWidth=".7" transform="translate(3 0)" />
    </Layer>
    <Pointer width="14" height="20" viewBox="0 0 14 20">
      <path d="M1 1 L1 15 L4.5 12 L7.5 18 L10 17 L7.2 11 L12 11 Z" fill="#fff" stroke="#555" />
    </Pointer>
  </Canvas>
);

// satellite strip, coordinates are arbitrary map units
const seeded = (seed) => {
  let s = seed;
  return () => {
    s = (s * 16807) % 2147483647;
    return s / 2147483647;
  };
};
const buildBlocks = () => {
  const r = seeded(4211);
  const out = [];
  const tones = ["#e0d9ca", "#5c554a", "#a89c88", "#cdc1ab", "#3e3a33", "#b8a88e", "#e9e3d6", "#7d7565", "#9d927f", "#c8c2b4", "#4d473e", "#8d8472"];
  for (let i = 0; i < 5200; i++) {
    const x = 134 + r() * 418;
    const y = 50 + r() * 1490;
    out.push({ x, y, w: 3 + r() * 5, h: 2 + r() * 4, fill: tones[Math.floor(r() * tones.length)] });
  }
  return out;
};
const blocks = buildBlocks();
const waterShape =
  "M330 50 L340 95 L310 190 L270 210 L255 290 L245 370 L235 470 L190 570 L134 605 L134 1090 L180 990 L150 960 L200 950 L230 920 L250 890 L215 820 L315 670 L345 720 L375 730 L395 680 L440 620 L372 600 L385 545 L430 530 L435 510 L440 460 L515 420 L515 375 L552 355 L552 50 Z";

const SatelliteMap = () => (
  <MapSvg viewBox="134 50 418 1490" preserveAspectRatio="none">
    <rect x="134" y="50" width="418" height="1490" fill="#8e8676" />
    {blocks.map((b, i) => (
      <rect key={i} x={b.x} y={b.y} width={b.w} height={b.h} fill={b.fill} />
    ))}
    <rect x="134" y="50" width="200" height="560" fill="#4a3f30" opacity=".22" />
    <g fill="none" stroke="#b5ab98" strokeWidth="7">
      <path d="M552 960 C480 1000 420 1070 415 1110 C410 1170 330 1240 300 1290 C270 1340 270 1400 300 1460 L325 1540" />
      <path d="M300 1040 C230 1110 170 1200 160 1320" />
      <path d="M552 600 C500 700 440 800 300 960" stroke="#bdb29e" strokeWidth="9" />
    </g>
    <path d="M190 980 L440 1065" stroke="#15181a" strokeWidth="8" />
    <g fill="none" stroke="#4c463c" strokeWidth="2.4">
      <path d="M134 180 L300 210M134 320 L250 330M134 430 L240 440M134 530 L200 520M134 130 L320 150M134 250 L260 260M134 380 L245 390" />
      <path d="M170 1060 L552 1110M160 1220 L552 1180M150 1350 L552 1320M300 1000 L552 980M250 1100 L160 1500M400 1100 L480 1540M200 1440 L552 1420" />
    </g>
    <path d={waterShape} fill="#05080a" />
    <path d="M436 575 L520 435 L552 470 L490 590 Z" fill="#0a0c0e" />
    <path d="M240 50h28v45h-28zM275 52h22v40h-22z" fill="#f0efe8" />
    <path d="M190 105h95v55h-95z" fill="#b4ad95" />
    <path d="M134 598 L190 565 L232 480 L238 474 L196 575 L134 606 Z" fill="#566f44" />
    <path d="M435 510 L445 472 L490 425 L512 424 L490 446 L455 480 L446 510 Z" fill="#55733f" />
    <path d="M372 600 L385 560 L420 530 L432 538 L410 580 L392 612 Z" fill="#4f6d3c" />
    <g stroke="#e2e2e2" strokeWidth="5" fill="none">
      <path d="M497 462l30 12M490 478l32 12M482 494l32 12M474 510l32 12M466 526l32 12M456 542l32 12M446 558l32 12" />
    </g>
    <path d="M500 600h30v25h-30z" fill="#f2f2f0" />
    <path d="M465 655 L495 640 L505 665 L478 685 Z" fill="#7da4c8" />
    <path d="M315 672 L345 720 L375 730 L350 800 L290 880 L255 880 L215 820 Z" fill="#a8aeae" />
    <path d="M315 740h42v40h-42z" fill="#ece8dc" />
    <path d="M260 810 L320 800 L325 850 L280 880 Z" fill="#93a2a8" />
    <path d="M290 700 L310 720 L250 800 L235 785 Z" fill="#8b9aa0" />
    <path d="M400 885 L415 895 L390 925 L380 915ZM430 905h20v15h-20zM360 975 L385 985 L370 1005 L352 1000Z" fill="#f3f1ea" />
    <path d="M405 1312h36v18h-36z" fill="#6d9a5a" />
    <path d="M415 1365 L490 1350 L505 1385 L430 1405 Z" fill="#7b8a48" />
    <path d="M134 1520h26v20h-26z" fill="#fbfbfb" />
    <path d="M440 745h25v20h-25zM505 790h30v30h-30z" fill="#d8d4c8" />
    <path d="M500 755h25v30h-25z" fill="#b89a70" />
    <path d="M345 1030h40v15h-40z" fill="#b8986e" />
  </MapSvg>
);

const operatorNames = ["Neighborhood", "Output", "Pathnames", "Photogrammetry", "Point Cloud", "Python", "Radar", "Raster", "Relational", "SIPS", "Size", "Stack", "Statistical", "Stretch", "String", "Surface", "Table", "Terrain", "View", "Zonal"];

const PinIcon = ({ c = "#555" }) => <Pin size={11} color={c} strokeWidth={2.2} />;
const TopGap = styled.span`
  display: flex;
  margin-top: ${(p) => p.$t}px;
`;

export default function App() {
  return (
    <Screen>
      <Global />
      <DesktopStrip />
      <Window>
        <TitleBar>
          <QuickIcons>
            <svg width="12" height="12" viewBox="0 0 12 12">
              <rect x=".5" y=".5" width="11" height="11" fill="#f2b36a" stroke="#e08a30" />
              <path d="M3 4h3M3 6h2M3 8h3M7 8V4l1.5 2L10 4v4" stroke="#a33" strokeWidth=".7" fill="none" />
            </svg>
            <svg width="14" height="12" viewBox="0 0 14 12">
              <path d="M1 3h5l1 1h6v7H1z" fill="#f0cf80" stroke="#c9a34a" />
            </svg>
            <svg width="12" height="13" viewBox="0 0 12 13">
              <rect width="12" height="13" rx="1" fill="#3a3a3a" />
              <rect x="3" y="1" width="6" height="4" fill="#ddd" />
            </svg>
            <UndoArrow />
            <svg width="12" height="13" viewBox="0 0 12 13" fill="none" stroke="#555">
              <path d="M2 1 L10 3 L8 11 L2 7 Z" />
            </svg>
            <svg width="16" height="12" viewBox="0 0 16 12">
              <path d="M2 9 L9 2 L13 5 L6 11 Z" fill="#8aa0c0" />
            </svg>
            <Drop>▼</Drop>
          </QuickIcons>
          <ContextTab>Spatia...</ContextTab>
          <WindowTitle>Untitled:1 - Spatial Model Editor 2022 Beta</WindowTitle>
          <WindowButtons>
            <span>–</span>
            <Square size={10} strokeWidth={2} />
            <X size={13} strokeWidth={2} />
          </WindowButtons>
        </TitleBar>
        <TabRow>
          <Tab $file $w={48}>File</Tab>
          <Tab $w={62}>Home</Tab>
          <Tab $active $w={89}>Spatial Modeler</Tab>
          <LoginArea>
            Login to Smart M.App
            <Home size={10} />
            <HelpDot>?</HelpDot>
          </LoginArea>
        </TabRow>
        <RibbonBar />
        <Panes>
          <Pane $w={195}>
            <PaneHeader>
              Contents
              <HeaderTools>
                <PinIcon />
                <X size={12} />
              </HeaderTools>
            </PaneHeader>
            <TreeBox>
              <ContentsTree />
              <HScroll>
                <ChevronLeft size={12} />
                <HThumb />
                <ChevronRight size={12} />
              </HScroll>
            </TreeBox>
          </Pane>
          <Pane $w={900} $mr={2}>
            <PaneHeader $active $pl={9}>
              Spatial Model Editor #1 : MyOrthorectifyImagery.gmdx : My Orthorectify Imagery
              <HeaderTools $c="#fff">
                <PinIcon c="#fff" />
                <X size={12} strokeWidth={3} />
              </HeaderTools>
            </PaneHeader>
            <EditorBody>
              <ModelCanvas />
              <VScroll>
                <TopGap $t={2}>
                  <ChevronUp size={11} />
                </TopGap>
                <VThumb />
              </VScroll>
            </EditorBody>
          </Pane>
          <Pane $w={181} $mr={1}>
            <PaneHeader $pl={8}>
              CLASS. N/A - ...
              <HeaderTools $gap={4} $c="#9cb7d2">
                <Paperclip size={12} />
                <Triangle size={12} />
                <Lock size={12} color="#6d8fb0" />
                <PinIcon c="#2a6aa0" />
                <X size={11} color="#2a6aa0" strokeWidth={3} />
              </HeaderTools>
            </PaneHeader>
            <MapPane>
              <SatelliteMap />
            </MapPane>
          </Pane>
          <Pane $w={311}>
            <PaneHeader $pl={6}>
              Operators
              <HeaderTools>
                <PinIcon />
                <X size={12} />
              </HeaderTools>
            </PaneHeader>
            <OpPanel $h={347}>
              <SearchRow>
                <SearchInput>Enter keyword search here</SearchInput>
                <ClearBtn>
                  <X size={13} strokeWidth={3} />
                </ClearBtn>
              </SearchRow>
              <OpBody>
                <OpList>
                  <OpRows>
                    {operatorNames.map((n) => (
                      <OpRow key={n}>
                        <RowGuide $x={6} />
                        <Expander $x={2} $plus />
                        <Toolbox />
                        {n}
                      </OpRow>
                    ))}
                  </OpRows>
                </OpList>
                <OpScroll>
                  <TopGap $t={3}>
                    <ChevronUp size={11} />
                  </TopGap>
                  <OpThumb />
                  <ChevronDown size={11} />
                </OpScroll>
              </OpBody>
            </OpPanel>
            <PaneHeader $pl={6}>
              Operator Info
              <HeaderTools>
                <PinIcon />
                <X size={12} />
              </HeaderTools>
            </PaneHeader>
            <OpPanel $h={323}>
              <Form>
                <Field>
                  <FieldLabel>Namespace:</FieldLabel>
                  <Input>IMAGINE</Input>
                </Field>
                <Field $mt={8}>
                  <FieldLabel>Name:</FieldLabel>
                  <Input>MyOrthorectifyImagery</Input>
                </Field>
                <Field $mt={7}>
                  <FieldLabel>Display Name:</FieldLabel>
                  <Input>My Orthorectify Imagery</Input>
                </Field>
                <Field $mt={8}>
                  <FieldLabel>Display Category:</FieldLabel>
                  <Input>Photogrammetry</Input>
                </Field>
                <Field $mt={8}>
                  <FieldLabel>Icon:</FieldLabel>
                  <IconCombo>
                    block.ico
                    <ChevronDown size={11} color="#555" />
                  </IconCombo>
                  <FolderSlot>
                    <FolderIcon />
                  </FolderSlot>
                </Field>
                <Field $mt={8} $h={48}>
                  <FieldLabel>Description:</FieldLabel>
                  <DescBox>
                    Orthorectifies an input image.
                    <DescScroll>
                      <ChevronUp size={11} />
                      <ChevronDown size={11} />
                    </DescScroll>
                  </DescBox>
                </Field>
                <Field $mt={3}>
                  <FieldLabel>Plugin File:</FieldLabel>
                  <Input $off />
                </Field>
                <Field $mt={8}>
                  <FieldLabel>Provider:</FieldLabel>
                  <Input $off />
                </Field>
                <Field $mt={10}>
                  <FieldLabel>Process. Method:</FieldLabel>
                  <SelectBox>
                    Asynchronous
                    <ChevronDown size={11} color="#555" />
                  </SelectBox>
                </Field>
              </Form>
            </OpPanel>
            <BottomTabs>
              <BottomTab $w={50}>Properties</BottomTab>
              <BottomTab $w={71} $on>Operator Info</BottomTab>
            </BottomTabs>
          </Pane>
        </Panes>
        <StatusBar>-21.05, -965.15</StatusBar>
      </Window>
    </Screen>
  );
}
